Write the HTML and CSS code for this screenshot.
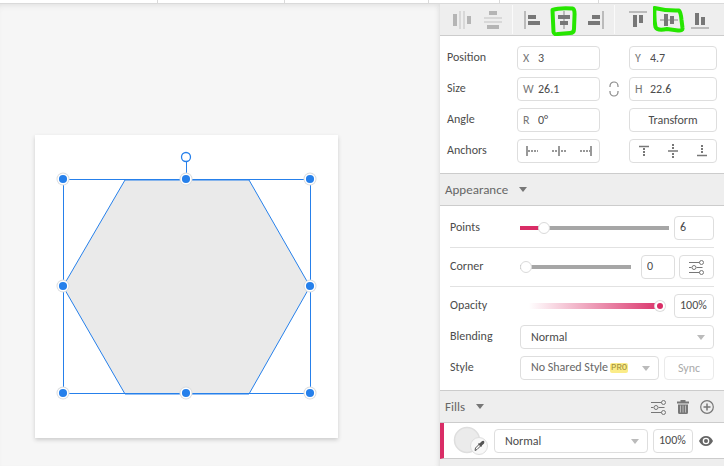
FILE: index.html
```html
<!DOCTYPE html>
<html lang="en">
<head>
<meta charset="utf-8">
<meta name="viewport" content="width=device-width, initial-scale=1">
<title>Shape editor</title>
<link rel="stylesheet" href="styles.css">
</head>
<body>
<svg class="defs" aria-hidden="true">
  <symbol id="sliders" viewBox="0 0 16 16">
    <g fill="none" stroke="currentColor">
      <path d="M0 3.500h10.500M0 8.500h2.500M7.500 8.500h6M0 13.500h10.500"/>
      <circle cx="12.500" cy="3.500" r="2"/><circle cx="5" cy="8.500" r="2"/><circle cx="12.500" cy="13.500" r="2"/>
    </g>
  </symbol>
</svg>
<div class="app">
  <header class="tabs"><span></span><span></span><span></span><span></span><span></span><span></span></header>
  <div class="workspace">
    <main class="canvas">
      <div class="artboard">
        <svg class="drawing" viewBox="0 0 303 303" aria-label="Hexagon">
          <path d="M28 151.500L90 45H214L275 151.500L214 259H90Z" fill="#eaeaea" stroke="#2680eb"/>
          <path d="M151.500 27V44M28.500 44.500H275.500V258.500H28.500Z" fill="none" stroke="#2680eb"/>
          <circle cx="151" cy="22" r="4.500" fill="#fff" stroke="#2680eb" stroke-width="1.300"/>
          <g fill="#d9dbdd">
            <circle cx="28" cy="44" r="6.500"/><circle cx="151" cy="44" r="6.500"/><circle cx="275" cy="44" r="6.500"/>
            <circle cx="28" cy="151" r="6.500"/><circle cx="275" cy="151" r="6.500"/>
            <circle cx="28" cy="258" r="6.500"/><circle cx="151" cy="258" r="6.500"/><circle cx="275" cy="258" r="6.500"/>
          </g>
          <g fill="#2680eb" stroke="#fff" stroke-width="1.500">
            <circle cx="28" cy="44" r="4.800"/><circle cx="151" cy="44" r="4.800"/><circle cx="275" cy="44" r="4.800"/>
            <circle cx="28" cy="151" r="4.800"/><circle cx="275" cy="151" r="4.800"/>
            <circle cx="28" cy="258" r="4.800"/><circle cx="151" cy="258" r="4.800"/><circle cx="275" cy="258" r="4.800"/>
          </g>
        </svg>
      </div>
    </main>
    <aside class="panel">
      <div class="toolbar">
        <div class="tools">
          <button class="tool faded" aria-label="Distribute horizontally"><svg viewBox="0 0 18 18"><path class="guide" d="M6 0h2v18h-2zM10 0h2v18h-2z"/><path d="M0 3h4v12h-4zM14 5h4v8h-4z"/></svg></button>
          <button class="tool faded" aria-label="Distribute vertically"><svg viewBox="0 0 18 18"><path class="guide" d="M0 6h18v2h-18zM0 10h18v2h-18z"/><path d="M5 0h8v4h-8zM3 14h12v4h-12z"/></svg></button>
        </div>
        <div class="separator"></div>
        <div class="tools">
          <button class="tool" aria-label="Align left"><svg viewBox="0 0 18 18"><path class="guide" d="M0 0h2v18h-2z"/><path d="M4 4h8v4h-8zM4 10h12v4h-12z"/></svg></button>
          <button class="tool" aria-label="Align center"><svg viewBox="0 0 18 18"><path class="guide" d="M8 0h2v18h-2z"/><path d="M3 4h12v4h-12zM5 10h8v4h-8z"/></svg><svg class="marker" viewBox="0 0 32 32"><path d="M4.500 6C10 4 18 4 24.500 4.500Q27 5 26.500 12L26 25Q26 29 22 29L10 30Q6 31 5.500 28Q5 17 4.500 6Z"/></svg></button>
          <button class="tool" aria-label="Align right"><svg viewBox="0 0 18 18"><path class="guide" d="M16 0h2v18h-2z"/><path d="M6 4h8v4h-8zM2 10h12v4h-12z"/></svg></button>
        </div>
        <div class="separator"></div>
        <div class="tools last">
          <button class="tool" aria-label="Align top"><svg viewBox="0 0 18 18"><path class="guide" d="M0 0h18v2h-18z"/><path d="M4 4h4v12h-4zM10 4h4v8h-4z"/></svg></button>
          <button class="tool" aria-label="Align middle"><svg viewBox="0 0 18 18"><path class="guide" d="M0 8h18v2h-18z"/><path d="M4 3h4v12h-4zM10 5h4v8h-4z"/></svg><svg class="marker" viewBox="0 0 32 32"><path d="M1.500 4Q14 7 26 6.500Q28 9 28.500 16L29.500 24Q30 27 25 26.500L14 25Q4 27 2.500 23Q1 16 1.500 4Z"/></svg></button>
          <button class="tool" aria-label="Align bottom"><svg viewBox="0 0 18 18"><path class="guide" d="M0 16h18v2h-18z"/><path d="M4 2h4v12h-4zM10 6h4v8h-4z"/></svg></button>
        </div>
      </div>

      <section class="geometry">
        <span>Position</span>
        <label class="field"><span>X</span><input type="text" value="3"></label>
        <label class="field second"><span>Y</span><input type="text" value="4.7"></label>
        <span>Size</span>
        <label class="field"><span>W</span><input type="text" value="26.1"></label>
        <button class="link" aria-label="Link proportions"><svg viewBox="0 0 10 16"><path d="M1 6V5a4 4 0 0 1 8 0v1M1 10v1a4 4 0 0 0 8 0v-1" fill="none" stroke="currentColor" stroke-width="1.200"/></svg></button>
        <label class="field"><span>H</span><input type="text" value="22.6"></label>
        <span>Angle</span>
        <label class="field"><span>R</span><input type="text" value="0°"></label>
        <button class="button second">Transform</button>
        <span>Anchors</span>
        <div class="anchors">
          <button aria-label="Anchor left"><svg viewBox="0 0 14 14"><path d="M2 2v10" stroke-width="1.500"/><path d="M3 7h10" stroke-width="1.500" stroke-dasharray="2 1"/></svg></button>
          <button aria-label="Anchor center"><svg viewBox="0 0 14 14"><path d="M7 2v10" stroke-width="1.500"/><path d="M0 7h6M9 7h5" stroke-width="1.500" stroke-dasharray="2 1"/></svg></button>
          <button aria-label="Anchor right"><svg viewBox="0 0 14 14"><path d="M12 2v10" stroke-width="1.500"/><path d="M1 7h10" stroke-width="1.500" stroke-dasharray="2 1"/></svg></button>
        </div>
        <div class="anchors second">
          <button aria-label="Anchor top"><svg viewBox="0 0 14 14"><path d="M2 2.500h10" stroke-width="1.500"/><path d="M7 4v8" stroke-width="2" stroke-dasharray="2 1"/></svg></button>
          <button aria-label="Anchor middle"><svg viewBox="0 0 14 14"><path d="M2 7h10" stroke-width="1.500"/><path d="M7 0v5M7 9v5" stroke-width="2" stroke-dasharray="2 1"/></svg></button>
          <button aria-label="Anchor bottom"><svg viewBox="0 0 14 14"><path d="M2 11.500h10" stroke-width="1.500"/><path d="M7 1v9" stroke-width="2" stroke-dasharray="2 1"/></svg></button>
        </div>
      </section>

      <h2 class="heading">Appearance<svg class="caret" viewBox="0 0 8 5"><path d="M0 0h8L4 5z"/></svg></h2>
      <section class="appearance">
        <div class="row">
          <label for="points">Points</label>
          <input id="points" class="slider filled" type="range" min="3" max="26" value="6">
          <input class="box wide" type="text" value="6" aria-label="Points value">
        </div>
        <hr>
        <div class="row">
          <label for="corner">Corner</label>
          <input id="corner" class="slider short" type="range" min="0" max="100" value="0">
          <input class="box" type="text" value="0" aria-label="Corner value">
          <button class="button options" aria-label="Corner options"><svg viewBox="0 0 16 16"><use href="#sliders"/></svg></button>
        </div>
        <hr>
        <div class="row">
          <label for="opacity">Opacity</label>
          <input id="opacity" class="slider fade" type="range" min="0" max="100" value="100">
          <input class="box wide" type="text" value="100%" aria-label="Opacity value">
        </div>
        <div class="row">
          <label for="blending">Blending</label>
          <div class="select"><select id="blending"><option>Normal</option></select><svg class="caret" viewBox="0 0 8 5"><path d="M0 0h8L4 5z"/></svg></div>
        </div>
        <div class="row">
          <label for="style">Style</label>
          <div class="select shared"><select id="style"><option>No Shared Style</option></select><span class="pro">PRO</span><svg class="caret" viewBox="0 0 8 5"><path d="M0 0h8L4 5z"/></svg></div>
          <button class="button sync" disabled>Sync</button>
        </div>
      </section>

      <div class="heading">
        <h2>Fills</h2><svg class="caret" viewBox="0 0 8 5"><path d="M0 0h8L4 5z"/></svg>
        <div class="actions">
          <button aria-label="Fill options"><svg viewBox="0 0 16 16"><use href="#sliders"/></svg></button>
          <button aria-label="Delete fill"><svg viewBox="0 0 16 16"><path d="M2 2.500h3.500V1h5v1.500H14v2H2zM3 5.500h10V13.500Q13 15 11.500 15h-7Q3 15 3 13.500z" fill="currentColor"/><path d="M5.500 6.500v7M8 6.500v7M10.500 6.500v7" stroke="#bbb"/></svg></button>
          <button aria-label="Add fill"><svg viewBox="0 0 16 16"><g fill="none" stroke="currentColor" stroke-width="1.200"><circle cx="8" cy="8" r="6.300"/><path d="M8 4.500v7M4.500 8h7" stroke-width="1.500"/></g></svg></button>
        </div>
      </div>
      <section class="fill">
        <button class="swatch" aria-label="Fill color"><svg viewBox="0 0 36 30"><circle cx="14" cy="14" r="12.500" fill="#ebebeb" stroke="#dedede" stroke-width="1.500"/><circle cx="26" cy="20" r="8.500" fill="#f8f8f8" stroke="#dedede"/><path d="M22 24.500l.5-2.500 4-4 1.500 1.500-4 4z" fill="#fff" stroke="#555"/><path d="M25.500 17.500l3 3M27 18l2-2q1-1 1.500-.5t0 1.500l-2 2z" fill="#555" stroke="#555" stroke-width="1.300"/></svg></button>
        <div class="select"><select aria-label="Fill blending"><option>Normal</option></select><svg class="caret" viewBox="0 0 8 5"><path d="M0 0h8L4 5z"/></svg></div>
        <input class="box wide" type="text" value="100%" aria-label="Fill opacity">
        <button class="eye" aria-label="Toggle visibility"><svg viewBox="0 0 14 12"><path d="M0 6Q2.500 1 7 1T14 6Q11.500 11 7 11T0 6z" fill="currentColor"/><circle cx="7" cy="6" r="3.300" fill="#fff"/><circle cx="7" cy="6" r="2" fill="currentColor"/></svg></button>
      </section>
    </aside>
  </div>
</div>
</body>
</html>
```
FILE: styles.css
```css
* { box-sizing: border-box; }
body { margin: 0; font: 12px/16px Carlito, Lato, sans-serif; color: #4c4c4c; }
button, input, select { font: inherit; color: inherit; margin: 0; }
button { padding: 0; border: 0; background: none; }
svg { display: block; }
h2 { margin: 0; font: inherit; }
.defs { position: absolute; width: 0; height: 0; }
.app { display: flex; flex-direction: column; min-height: 100vh; }

.tabs { display: grid; grid-template-columns: 158px 127px 144px 71px 99px 1fr; height: 4px; border-bottom: 1px solid #dadada; background: #fff; }
.tabs span:not(:last-child) { border-right: 1px solid #dadada; }

.workspace { display: flex; flex: 1; }
.canvas { flex: 1; padding: 131px 35px 28px; background: #f6f6f6; box-shadow: inset 0 5px 6px -4px #ddd, inset -5px 0 5px -4px #ddd; }
.artboard { width: 303px; background: #fff; box-shadow: 0 2px 4px #ccc; }
.drawing { width: 100%; }

.panel { width: 284px; flex: none; background: #eee; }
.toolbar { display: flex; padding: 7px 9px 6px 7px; border-bottom: 1px solid #ccc; }
.tools { display: flex; gap: 1px; }
.tools.last { margin-left: auto; }
.tool { position: relative; width: 30px; }
.tool > svg { width: 18px; height: 18px; margin: 0 auto; fill: #777; }
.tool .guide { fill: #bbb; }
.tool.faded > svg { fill: #b5b5b5; }
.tool.faded .guide { fill: #d8d8d8; }
.tool .marker { position: absolute; left: -1px; top: -7px; width: 32px; height: 32px; fill: none; stroke: #26e600; stroke-width: 4px; stroke-linejoin: round; }
.separator { width: 1px; margin: -6px 5px -5px 4px; background: #fafafa; }

.geometry { display: grid; grid-template-columns: 70px 83fr 29px 88fr; row-gap: 7px; align-items: center; padding: 10px 7px; background: #fff; }
.geometry > span { padding-bottom: 2px; }
.second { grid-column: 4; }
.field, .button, .box, .anchors, .select { height: 24px; border: 1px solid #dedede; border-radius: 4px; background: #fff; }
.field { display: flex; align-items: center; padding: 0 0 1px 5px; }
.field span { width: 15px; color: #777; }
.field input { flex: 1; min-width: 0; width: 0; padding: 0; border: 0; background: none; outline: 0; }
.button { padding-bottom: 1px; }
.link { justify-self: center; margin-right: 2px; color: #888; }
.link svg { width: 10px; height: 16px; }
.anchors { display: flex; justify-content: space-around; align-items: center; padding-bottom: 1px; }
.anchors svg { height: 14px; width: 14px; fill: none; stroke: #777; }

.heading { display: flex; align-items: center; height: 33px; padding: 0 9px 0 5px; border: solid #ccc; border-width: 1px 0; font-size: 13px; color: #666; }
.caret { width: 8px; height: 5px; fill: #777; }
.heading .caret { margin-left: 11px; }
.actions { display: flex; gap: 8px; margin-left: auto; color: #777; }
.actions svg { width: 16px; height: 16px; }

.appearance { display: flex; flex-direction: column; gap: 7px; padding: 10px; background: #fff; }
.appearance hr { width: 100%; height: 1px; margin: 0; border: 0; background: #e2e2e2; }
.row { display: flex; align-items: center; }
.row > label { width: 70px; flex: none; padding-bottom: 2px; }
.box { width: 34px; flex: none; padding: 0 0 2px 5px; outline: 0; }
.box.wide { width: 40px; }
.row .box { margin-left: 5px; }
.row .short + .box { margin-left: 10px; }
.options { width: 35px; flex: none; margin-left: 4px; }
.options svg { width: 16px; height: 16px; margin: 0 auto; color: #777; }
.slider { flex: 1; min-width: 0; height: 12px; appearance: none; background: linear-gradient(#a6a6a6, #a6a6a6) center / 100% 4px no-repeat; outline: 0; }
.slider::-webkit-slider-thumb { appearance: none; width: 12px; height: 12px; border: 1px solid #dadada; border-radius: 50%; background: #fff; }
.slider.filled { background-image: linear-gradient(90deg, #d92d66 16%, #a6a6a6 16%); }
.slider.fade { margin-right: 4px; background: linear-gradient(90deg, #fff 6%, #d92d66) center / 100% 6px no-repeat; }
.slider.fade::-webkit-slider-thumb { width: 10px; height: 10px; border: 2px solid #fff; background: #d92d66; box-shadow: 0 0 0 1px #ddd; }

.select { position: relative; display: flex; flex: 1; min-width: 0; }
.select select { width: 100%; padding: 0 20px 0 10px; border: 0; background: none; appearance: none; outline: 0; }
.select .caret { position: absolute; right: 8px; top: 9px; fill: #bbb; pointer-events: none; }
.shared { color: #666; }
.shared select { padding-bottom: 2px; }
.pro { position: absolute; left: 89px; top: 6px; padding: 0 1px; border-radius: 2px; background: #fbec88; font: 9px/10px "Liberation Mono", monospace; color: #a08f3c; pointer-events: none; }
.sync { width: 50px; flex: none; margin-left: 5px; border-color: #eaeaea; color: #aaa; }

.fill { display: flex; align-items: center; height: 36px; padding-right: 11px; border-left: 4px solid #d92d66; border-bottom: 1px solid #ccc; background: #fff; }
.swatch { margin: 0 5px 0 9px; }
.swatch svg { width: 36px; height: 30px; }
.fill .box { margin: 0 6px 0 5px; }
.eye { color: #666; }
.eye svg { width: 14px; height: 12px; }
```
